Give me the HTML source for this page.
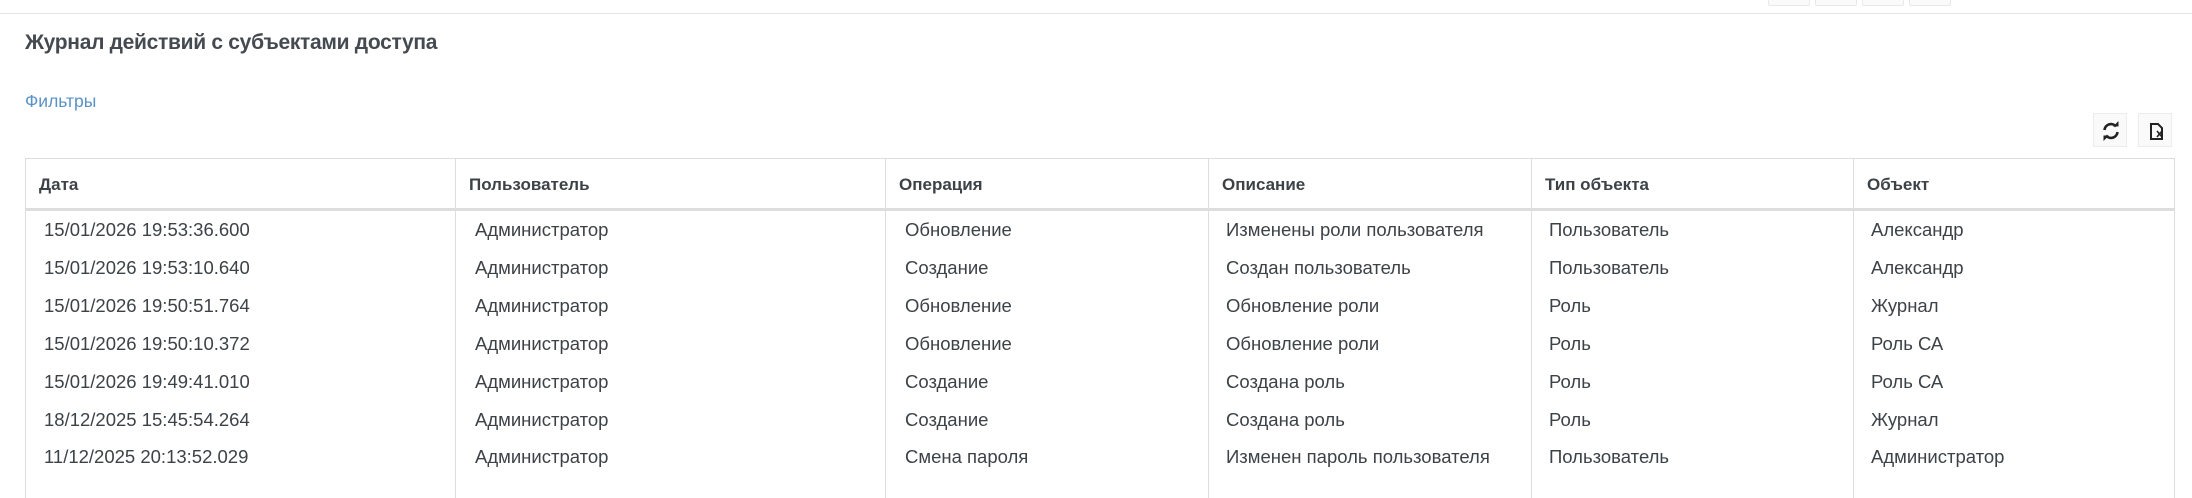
<!DOCTYPE html>
<html><head><meta charset="utf-8"><style>
body{margin:0;width:2192px;height:492px;overflow:hidden;background:#fff;font-family:"Liberation Sans",sans-serif;color:#3d4247;position:relative}
.abs{position:absolute}
.tb{position:absolute;top:-2px;height:6px;border:1px solid #e8e8e8;background:#fafafa;border-radius:2px}
.title{left:25px;top:31px;font-size:21px;font-weight:bold;color:#454a50;letter-spacing:-0.3px}
.filt{left:25px;top:91px;font-size:17.5px;color:#5a92c6}
.btn{top:113px;width:34px;height:34px;border:1px solid #ececec;background:#fafafa;box-sizing:border-box}
.tab{left:25px;top:158px;width:2150px;height:340px;border:1px solid #ddd;border-bottom:none;box-sizing:border-box}
.hb{left:25px;top:208px;width:2150px;height:3px;background:#ddd}
.vl{top:158px;width:1px;height:340px;background:#ddd}
.h{top:175px;font-size:17px;font-weight:bold;color:#3d4247}
.c{font-size:18.5px;color:#3d4247;line-height:37.9px;top:211px}
</style></head><body>
<div class="abs" style="left:0;top:13px;width:2192px;height:1px;background:#e6e6e6"></div>
<div class="tb" style="left:1768px;width:40px"></div>
<div class="tb" style="left:1815px;width:40px"></div>
<div class="tb" style="left:1862px;width:40px"></div>
<div class="tb" style="left:1909px;width:40px"></div>
<div class="abs title">Журнал действий с субъектами доступа</div>
<div class="abs filt">Фильтры</div>
<div class="abs btn" style="left:2093px"><svg width="34" height="34" viewBox="0 0 34 34"><path d="M10.5 16a6.5 6.5 0 0 1 11.5-3.5" stroke="#222" stroke-width="2.6" fill="none"/><path d="M19 12.5h5.5V7z" fill="#222"/><path d="M23.5 18a6.5 6.5 0 0 1-11.5 3.5" stroke="#222" stroke-width="2.6" fill="none"/><path d="M15 21.5H9.5V27z" fill="#222"/></svg></div>
<div class="abs btn" style="left:2138px"><svg width="34" height="34" viewBox="0 0 34 34"><path d="M12 10h7l4 4v11H12z" stroke="#222" stroke-width="2" fill="none"/><path d="M18 17l5 6M23 17l-5 6" stroke="#222" stroke-width="1.6"/></svg></div>
<div class="abs tab"></div>
<div class="abs hb"></div>
<div class="abs vl" style="left:455px"></div>
<div class="abs vl" style="left:885px"></div>
<div class="abs vl" style="left:1208px"></div>
<div class="abs vl" style="left:1531px"></div>
<div class="abs vl" style="left:1853px"></div>
<div class="abs h" style="left:39px">Дата</div>
<div class="abs h" style="left:469px">Пользователь</div>
<div class="abs h" style="left:899px">Операция</div>
<div class="abs h" style="left:1222px">Описание</div>
<div class="abs h" style="left:1545px">Тип объекта</div>
<div class="abs h" style="left:1867px">Объект</div>
<div class="abs c" style="left:44px">15/01/2026 19:53:36.600<br>15/01/2026 19:53:10.640<br>15/01/2026 19:50:51.764<br>15/01/2026 19:50:10.372<br>15/01/2026 19:49:41.010<br>18/12/2025 15:45:54.264<br>11/12/2025 20:13:52.029</div>
<div class="abs c" style="left:475px">Администратор<br>Администратор<br>Администратор<br>Администратор<br>Администратор<br>Администратор<br>Администратор</div>
<div class="abs c" style="left:905px">Обновление<br>Создание<br>Обновление<br>Обновление<br>Создание<br>Создание<br>Смена пароля</div>
<div class="abs c" style="left:1226px">Изменены роли пользователя<br>Создан пользователь<br>Обновление роли<br>Обновление роли<br>Создана роль<br>Создана роль<br>Изменен пароль пользователя</div>
<div class="abs c" style="left:1549px">Пользователь<br>Пользователь<br>Роль<br>Роль<br>Роль<br>Роль<br>Пользователь</div>
<div class="abs c" style="left:1871px">Александр<br>Александр<br>Журнал<br>Роль СА<br>Роль СА<br>Журнал<br>Администратор</div>
</body></html>
